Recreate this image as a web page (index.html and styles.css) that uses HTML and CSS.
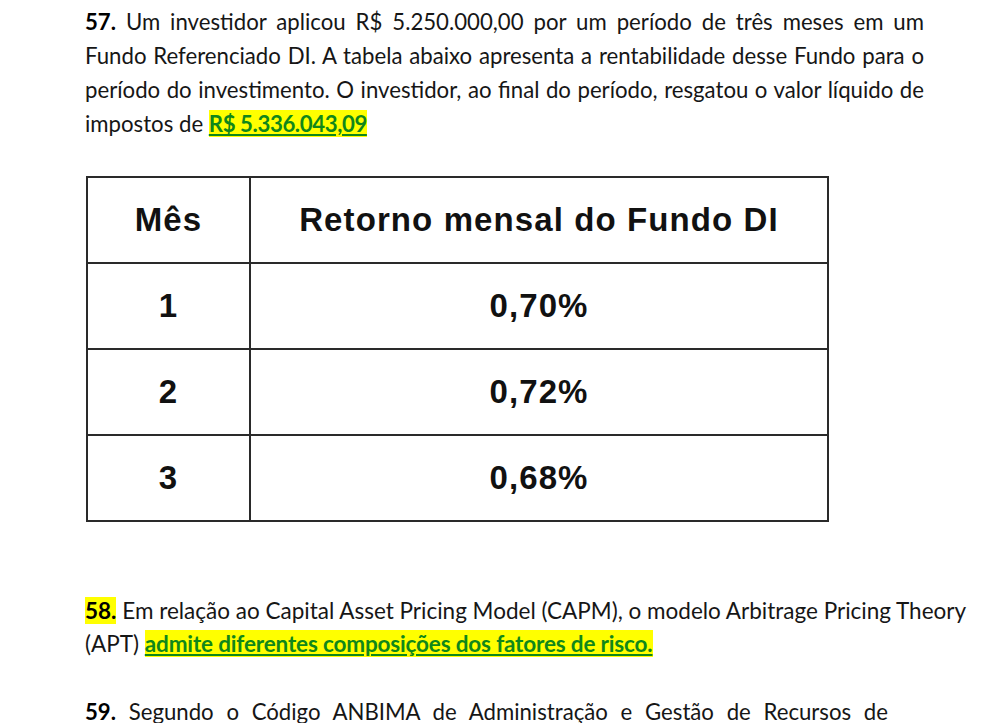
FILE: index.html
```html
<!DOCTYPE html>
<html lang="pt-BR">
<head>
<meta charset="utf-8">
<title>Questões</title>
<link rel="stylesheet" href="styles.css">
</head>
<body>
<main class="page">
  <p class="q q57">
    <span class="ln"><b class="num">57.</b> Um investidor aplicou R$ 5.250.000,00 por um período de três meses em um</span>
    <span class="ln">Fundo Referenciado DI. A tabela abaixo apresenta a rentabilidade desse Fundo para o</span>
    <span class="ln">período do investimento. O investidor, ao final do período, resgatou o valor líquido de</span>
    <span class="ln last">impostos de <span class="answer tight">R$ 5.336.043,09</span></span>
  </p>

  <table class="returns">
    <thead>
      <tr><th class="c-mes">Mês</th><th>Retorno mensal do Fundo DI</th></tr>
    </thead>
    <tbody>
      <tr><td>1</td><td>0,70%</td></tr>
      <tr><td>2</td><td>0,72%</td></tr>
      <tr><td>3</td><td>0,68%</td></tr>
    </tbody>
  </table>

  <p class="q q58">
    <span class="ln last"><b class="num mark">58.</b> Em relação ao Capital Asset Pricing Model (CAPM), o modelo Arbitrage Pricing Theory</span>
    <span class="ln last">(APT) <span class="answer snug">admite diferentes composições dos fatores de risco.</span></span>
  </p>

  <p class="q q59">
    <span class="ln"><b class="num">59.</b> Segundo o Código ANBIMA de Administração e Gestão de Recursos de</span>
  </p>
</main>
</body>
</html>
```

FILE: styles.css
```css
html, body {
  margin: 0;
  padding: 0;
  background: #ffffff;
}

.page {
  padding: 5px 0 0 85px;
  font-family: "Lato", "Liberation Sans", sans-serif;
  color: #161616;
}

.q {
  margin: 0;
  font-size: 22.2px;
  line-height: 34px;
}

.ln {
  display: block;
  white-space: nowrap;
  text-align: justify;
  text-align-last: justify;
}

.ln.last {
  text-align: left;
  text-align-last: left;
}

.num {
  font-weight: 700;
  color: #000;
}

.mark {
  background: #ffff00;
}

.answer {
  font-weight: 700;
  color: #10871a;
  background: #ffff00;
  text-decoration: underline;
  text-underline-offset: 2px;
}

.answer.tight {
  letter-spacing: -0.4px;
}

.answer.snug {
  letter-spacing: -0.16px;
}

.q57 {
  width: 839px;
}

.returns {
  margin: 35px 0 0 1px;
  width: 743px;
  border-collapse: collapse;
  font-family: "Liberation Sans", "Arial", sans-serif;
  font-weight: 700;
  font-size: 33px;
  letter-spacing: 1.1px;
  color: #111111;
}

.returns th,
.returns td {
  height: 84px;
  padding: 0;
  border: 2px solid #2a2a2a;
  text-align: center;
  font-weight: 700;
}

.returns .c-mes {
  width: 161px;
}

.q58 {
  margin-top: 72px;
  font-size: 22.5px;
  line-height: 33px;
}

.q59 {
  margin-top: 35px;
  width: 803px;
}
```
